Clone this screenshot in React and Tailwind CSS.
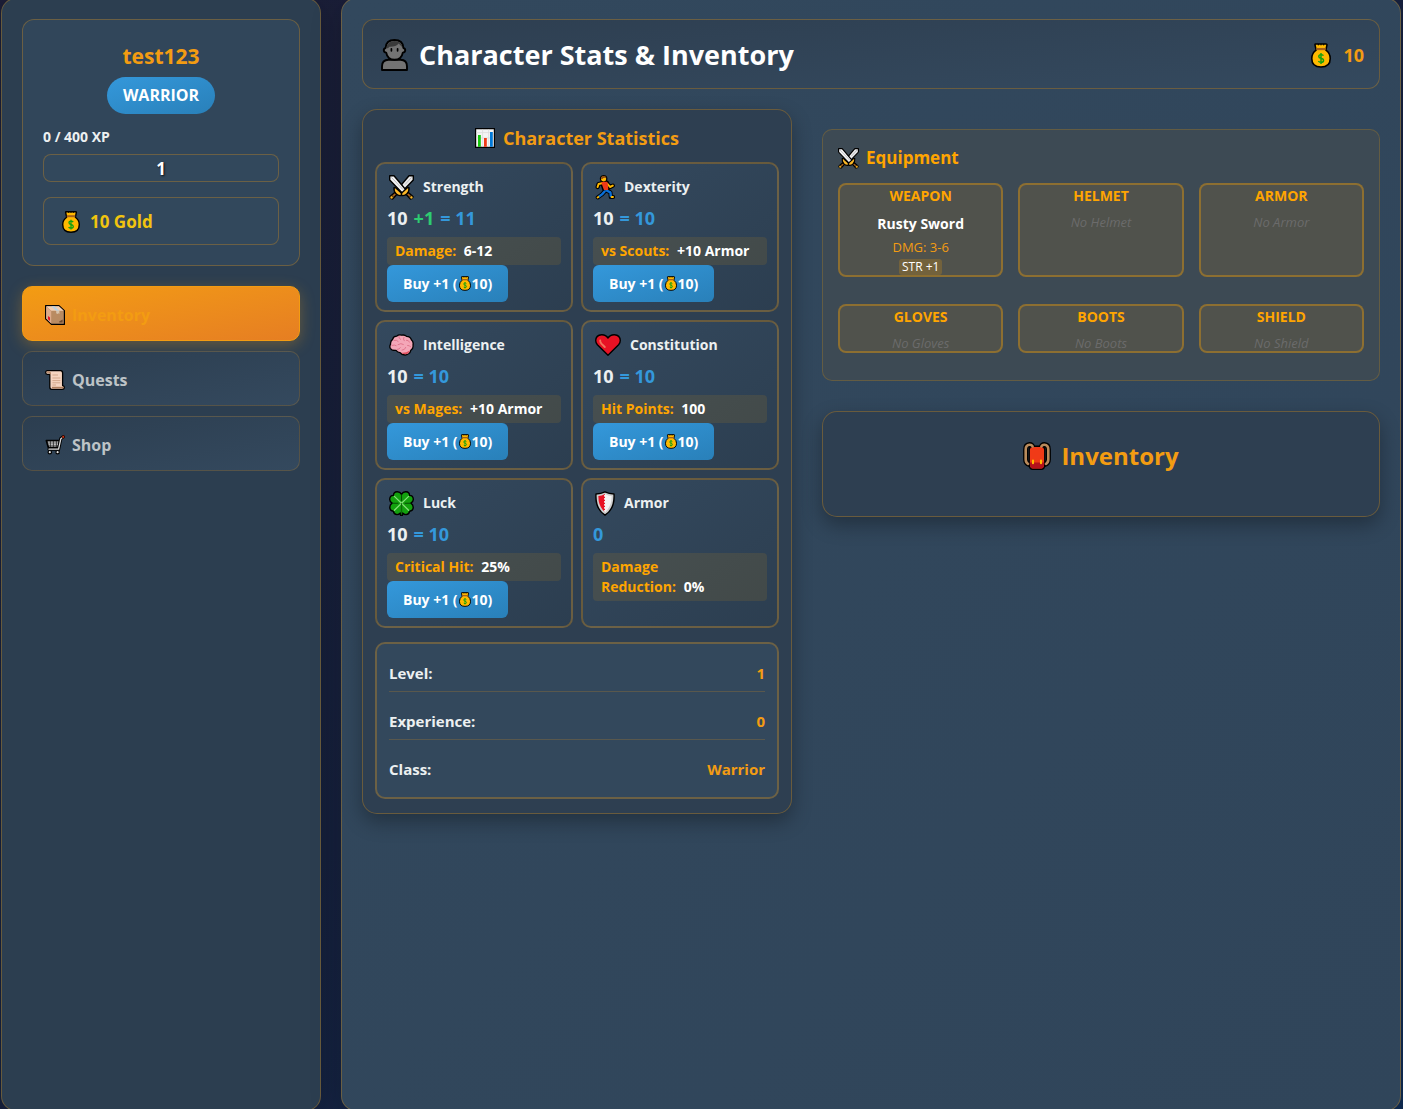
import React from "react";

function MoneyBag({ className }) {
  return (
    <svg viewBox="0 0 18 22" className={className} aria-hidden="true">
      <path d="M3.6 1.2Q3.6.7 4.2.7H13.6Q14.4.7 14.4 1.4L13.4 6.2Q17.3 9 17.3 13.6 17.3 21.3 9 21.3 .7 21.3 .7 13.6 .7 9 4.6 6.2L3.6 1.4Z" fill="#ffb900" stroke="#000" strokeWidth="1.4" strokeLinejoin="round" />
      <path d="M4.8 4.2h8.4v2H4.8z" fill="#a4611b" />
      <path d="M6.6.6v1.3M9 .6v1.3M11.4.6v1.3" stroke="#000" strokeWidth=".9" />
      <path d="M11.2 11.2Q10.6 10.2 9 10.2 7 10.2 7 11.8 7 13.1 9 13.5 11.3 14 11.3 15.5 11.3 17.2 9 17.2 7.2 17.2 6.7 16M9 8.8v9.8" fill="none" stroke="#13a10e" strokeWidth="1.3" />
    </svg>
  );
}

function Swords({ className }) {
  return (
    <svg viewBox="0 0 25 25" className={className} aria-hidden="true">
      <g stroke="#000" strokeWidth="1.4" strokeLinejoin="round">
        <path d="M24.3.8V5L11.5 18.2 8.2 14.8 20 .8Z" fill="#ececec" />
        <path d="M2.2 20.5 6 17.2 8 19.2 4.8 22.8 3.6 24 1 21.8Z" fill="#a4611b" />
        <path d="M5 12.6Q6.6 12 8 14L11.8 17.4Q13.2 19 12 20.6 9 21 7 18.8 4.6 16.4 5 12.6Z" fill="#fcb827" />
        <path d="M.7.8V5L13.5 18.2 16.8 14.8 5 .8Z" fill="#f6f6f6" />
        <path d="M22.8 20.5 19 17.2 17 19.2 20.2 22.8 21.4 24 24 21.8Z" fill="#a4611b" />
        <path d="M20 12.6Q18.4 12 17 14L13.2 17.4Q11.8 19 13 20.6 16 21 18 18.8 20.4 16.4 20 12.6Z" fill="#fcb827" />
      </g>
      <path d="M2.4 2.4 14 14.6" stroke="#a8a8b0" strokeWidth=".8" />
      <path d="M22.6 2.4 16 9.6" stroke="#a8a8b0" strokeWidth=".8" />
      <circle cx="2.6" cy="22.4" r="1.6" fill="#fcb827" stroke="#000" strokeWidth=".7" />
      <circle cx="22.4" cy="22.4" r="1.6" fill="#fcb827" stroke="#000" strokeWidth=".7" />
    </svg>
  );
}

function Runner({ className }) {
  return (
    <svg viewBox="0 0 20 25" className={className} aria-hidden="true">
      <g fill="none" strokeLinecap="round" strokeLinejoin="round">
        <g stroke="#000" strokeWidth="4.2">
          <path d="M7 8.2 3.6 9 2.6 12M12.6 9 15 12 17.8 10.6M11.5 15.5 15.4 17.4 15.8 22H18M9.6 16.5 7 19.4 2.8 22.4" />
          <path d="M7.2 7.8 11.8 7.6 12.6 14.8 9.4 14.7Z" fill="#000" />
        </g>
        <circle cx="8.6" cy="3.8" r="3.2" fill="#ffb900" stroke="#000" strokeWidth="1.2" />
        <path d="M5.9 3.8Q5.8 1.2 8.6 1 11.4 1.2 11.4 3Q8.8 2 7.4 4Z" fill="#8e4a12" />
        <path d="M7 8.2 3.6 9 2.6 12M12.6 9 15 12 17.8 10.6" stroke="#ffb900" strokeWidth="2" />
        <path d="M11.5 15.5 15.4 17.4 15.8 21M9.6 16.5 7 19.4 4.4 21.3" stroke="#0a6fd8" strokeWidth="2.4" />
        <path d="M7.4 7.9 11.7 7.7 12.4 14.2 9.6 14.1Z" fill="#f03a17" stroke="#f03a17" strokeWidth="1.8" />
        <path d="M2.6 22.5 3.4 22M16.6 22H18" stroke="#ffb900" strokeWidth="1.9" />
      </g>
    </svg>
  );
}

function Brain({ className }) {
  return (
    <svg viewBox="0 0 25 22" className={className} aria-hidden="true">
      <path d="M7 16.4Q2.5 16.6 1.2 14.2 .3 12 1.6 10.2 1.2 7 3.6 5.4 4.2 2.4 7.6 2.2 9.8.4 12.6 1.2 15.6.4 17.6 2.4 21.4 2.6 22.4 5.8 24.8 8 24 11 24.6 14.8 21.8 16.4 20.8 20.6 16.2 21 12.6 20.8 11 18.6 8.6 18.6 7 16.4Z" fill="#f4a6b7" stroke="#000" strokeWidth="1.3" />
      <path d="M12 18.6Q16 19.6 21 16.4 19.8 20 16.2 20.3 13.2 20.2 12 18.6Z" fill="#e0505f" />
      <path d="M5 6.4Q7.6 5.4 9.2 7.4M9.8 2.4Q9.6 4.6 11.6 5.4M15 3.2Q13.6 5 15.2 6.8M3 11.4Q5.4 10.4 7.2 11.6M9 10.6Q12 8.6 14.4 10.4M17.4 6.2Q19.8 6 20.6 8.2M8.4 15.4Q10.4 15.6 11.4 13.6M13 16.2Q16 16 16.8 13.4M18.6 11.4Q20.8 11.2 21.8 13" fill="none" stroke="#dd7088" strokeWidth=".9" strokeLinecap="round" />
    </svg>
  );
}

function Heart({ className }) {
  return (
    <svg viewBox="0 0 26 22" className={className} aria-hidden="true">
      <path d="M13 21.2 2.4 10.8Q.7 8.8.7 6.6.9 1 6.6.7 10.8.6 13 4 15.2.6 19.4.7 25.1 1 25.3 6.6 25.3 8.8 23.6 10.8Z" fill="#e81224" stroke="#000" strokeWidth="1.4" strokeLinejoin="round" />
      <path d="M5.2 6.4Q5 8 6.4 9.6L9.8 13" fill="none" stroke="#f2735c" strokeWidth="1.9" strokeLinecap="round" />
    </svg>
  );
}

function Clover({ className }) {
  return (
    <svg viewBox="0 0 25 25" className={className} aria-hidden="true">
      <path d="M12.5 3.4Q14 .6 17 .8 20.4 1 20.6 4.4 24 4.4 24.3 8 24.4 11 21.8 12.2 24.4 13.6 24.2 16.6 24 20 20.6 20.2 20.2 23.4 17 23.6 15 23.6 13.6 22L13.4 24.4H11.6L11.4 22Q10 23.6 8 23.6 4.8 23.4 4.4 20.2 1 20 .8 16.6.6 13.6 3.2 12.2.6 11 .7 8 1 4.4 4.4 4.4 4.6 1 8 .8 11 .6 12.5 3.4Z" fill="#13a10e" stroke="#000" strokeWidth="1.4" strokeLinejoin="round" />
      <path d="M12.5 3.6V10M12.5 14.5V22M3.4 12.2H9.4M15.6 12.2H21.6" stroke="#064d06" strokeWidth="1.1" />
      <path d="M5.4 5.4 19.6 19.2M19.6 5.4 5.4 19.2" stroke="#85e07a" strokeWidth="1.3" strokeLinecap="round" />
      <path d="M12.5 12.2V23.4" stroke="#0b6a0b" strokeWidth="1.2" />
    </svg>
  );
}

function Shield({ className }) {
  return (
    <svg viewBox="0 0 20 25" className={className} aria-hidden="true">
      <path d="M10 .8Q14 2.8 19 3 20 17.8 10 24.2 0 17.8 1 3 6 2.8 10 .8Z" fill="#cfcfcf" stroke="#000" strokeWidth="1.4" strokeLinejoin="round" />
      <path d="M10 3Q6.6 4.8 3.4 5 3.2 15.8 10 21Z" fill="#e81224" />
      <path d="M10 3Q13.4 4.8 16.6 5 16.8 15.8 10 21Z" fill="#f4f4f4" />
      <path d="M10 4v17" stroke="#f4f4f4" strokeWidth="1.8" strokeDasharray="1.7 1.3" />
    </svg>
  );
}

function Person({ className }) {
  return (
    <svg viewBox="0 0 27 32" className={className} aria-hidden="true">
      <g stroke="#000" strokeWidth="1.9" strokeLinejoin="round">
        <path d="M1 31V27.4Q1 21 7.4 20.8H19.6Q26 21 26 27.4V31Z" fill="#737373" />
        <path d="M4.6 9Q5 1 13.5 1 22 1 22.4 9 24.4 9.4 24.2 11.4 24 13.6 21.8 13.6 20.6 20.6 13.5 20.8 6.4 20.6 5.2 13.6 3 13.6 2.8 11.4 2.6 9.4 4.6 9Z" fill="#737373" />
      </g>
      <path d="M5.6 8.4Q6.4 2 13.5 1.9 20.6 2 21.4 8.4L20.4 7.2 17.6 4.6Q15 8 8.4 7.8L6.8 9.4Z" fill="#3a3a3a" />
      <path d="M10.4 9.8v2M16.6 9.8v2" stroke="#000" strokeWidth="1.7" strokeLinecap="round" />
    </svg>
  );
}

function BarChart({ className }) {
  return (
    <svg viewBox="0 0 20 20" className={className} aria-hidden="true">
      <path d="M.6.6H19.4V19.4H.6Z" fill="#f4f4f4" stroke="#000" strokeWidth="1.2" />
      <path d="M7.6 1.6V18.6M13.6 1.6V18.6M1.4 4.6H18.6M1.4 10H18.6" stroke="#dcdcdc" strokeWidth=".8" />
      <path d="M3 7H5.8V18.8H3Z" fill="#16c60c" />
      <path d="M9 10H11.8V18.8H9Z" fill="#f03a17" />
      <path d="M15 4H17.8V18.8H15Z" fill="#0078d7" />
    </svg>
  );
}

function Package({ className }) {
  return (
    <svg viewBox="0 0 20 20" className={className} aria-hidden="true">
      <path d="M.6.6H14L19.4 5.6V19.4H6.4L.6 13.8Z" fill="#b98b62" stroke="#000" strokeWidth="1.2" strokeLinejoin="round" />
      <path d="M1.2 1.2H13.8L18.8 5.8H6.2Z" fill="#f1cfb5" />
      <path d="M1.2 1.4 6.2 6V18.4L1.2 13.6Z" fill="#dcab8b" />
      <path d="M6.4 1.2H9.4L14.4 5.8H11.2Z" fill="#b9d3e6" />
      <path d="M11.2 5.8H14.4V9L13.4 8.2 12.4 9 11.2 8.2Z" fill="#d8c3ac" />
      <path d="M3 11 5 12.6V16L3 14.2Z" fill="#e81224" />
      <path d="M14.2 16.4 17.6 14.6V17.4H14.4Z" fill="#6b4a30" />
    </svg>
  );
}

function Scroll({ className }) {
  return (
    <svg viewBox="0 0 20 20" className={className} aria-hidden="true">
      <path d="M2.2.7H15.6Q17.6.9 17.6 3V15.6Q19.4 16 19.3 17.4 19.2 19.3 17 19.3H6.6Q4.8 19.2 4.8 17V4.4H2.4Q.7 4.2.7 2.4.8.8 2.2.7Z" fill="#f6d5c0" stroke="#000" strokeWidth="1.3" strokeLinejoin="round" />
      <path d="M1.6 2.2H4.2Q5.6 2.4 5.4 4.2" fill="none" stroke="#b07f5e" strokeWidth="1.2" />
      <path d="M7 17.6H18.6" stroke="#b07f5e" strokeWidth="1.6" />
      <path d="M7.4 5H13M7.4 8H15.4M7.4 10.6H15.4M7.4 12.8H15.4M7.4 15H11" stroke="#d3a88c" strokeWidth="1" />
    </svg>
  );
}

function Cart({ className }) {
  return (
    <svg viewBox="0 0 20 20" className={className} aria-hidden="true">
      <path d="M1.4 5.6H14.8L13.2 12.4H3.4Z" fill="#f2f2f2" stroke="#000" strokeWidth="1.8" strokeLinejoin="round" />
      <path d="M2.2 8H14M3 10.2H13.4M5.4 6V12M8.4 6V12M11.4 6V12" stroke="#222" strokeWidth=".8" />
      <path d="M18.2 1.8 15.8 3.6 13.6 14.2H4" fill="none" stroke="#000" strokeWidth="3.2" strokeLinecap="round" />
      <path d="M18 2 15.8 3.8 13.6 14.2H4" fill="none" stroke="#dedede" strokeWidth="1.3" strokeLinecap="round" />
      <circle cx="18.2" cy="1.9" r="1.3" fill="#f03a17" stroke="#000" strokeWidth=".6" />
      <circle cx="4.8" cy="17.2" r="1.7" fill="#e6e6e6" stroke="#000" strokeWidth="1.2" />
      <circle cx="12.6" cy="17.2" r="1.7" fill="#e6e6e6" stroke="#000" strokeWidth="1.2" />
    </svg>
  );
}

function Backpack({ className }) {
  return (
    <svg viewBox="0 0 28 28" className={className} aria-hidden="true">
      <g fill="none" strokeLinecap="round">
        <path d="M9.8 5.6Q9 2.6 6.6 2.7 2.7 3 2.7 7.4V17.6Q2.7 21.2 6.2 22.4M18.2 5.6Q19 2.6 21.4 2.7 25.3 3 25.3 7.4V17.6Q25.3 21.2 21.8 22.4" stroke="#000" strokeWidth="5.2" />
      </g>
      <path d="M9.4 4.2H18.6Q21.4 4.6 21.8 7.4V22.6Q21.6 27.2 18.2 27.3H9.8Q6.4 27.2 6.2 22.6V7.4Q6.6 4.6 9.4 4.2Z" fill="#f03a17" stroke="#000" strokeWidth="1.4" />
      <path d="M6.9 20.4H21.1V22.6Q20.8 26.5 18.2 26.6H9.8Q7.2 26.5 6.9 22.6Z" fill="#b5121b" />
      <path d="M9.6 4.4Q8.6 2.6 6.6 2.7 2.7 3 2.7 7.4V17.6Q2.7 20.6 5 21.8M18.4 4.4Q19.4 2.6 21.4 2.7 25.3 3 25.3 7.4V17.6Q25.3 20.6 23 21.8" fill="none" stroke="#b98b5c" strokeWidth="2.6" strokeLinecap="round" />
      <path d="M10 18.6V21.2M18 18.6V21.2" stroke="#ffb900" strokeWidth="2.1" strokeLinecap="round" />
    </svg>
  );
}

const navItems = [
  { label: "Inventory", Icon: Package, active: true },
  { label: "Quests", Icon: Scroll },
  { label: "Shop", Icon: Cart },
];

const stats = [
  { name: "Strength", Icon: Swords, size: "h-[25px] w-[25px]", base: 10, bonus: "+1", total: 11, effect: "Damage:", value: "6-12" },
  { name: "Dexterity", Icon: Runner, size: "h-[25px] w-5", base: 10, total: 10, effect: "vs Scouts:", value: "+10 Armor" },
  { name: "Intelligence", Icon: Brain, size: "h-[22px] w-[25px]", base: 10, total: 10, effect: "vs Mages:", value: "+10 Armor" },
  { name: "Constitution", Icon: Heart, size: "h-[22px] w-[26px]", base: 10, total: 10, effect: "Hit Points:", value: "100" },
  { name: "Luck", Icon: Clover, size: "h-[25px] w-[25px]", base: 10, total: 10, effect: "Critical Hit:", value: "25%" },
  { name: "Armor", Icon: Shield, size: "h-[25px] w-5", total: 0, effect: "Damage Reduction:", value: "0%" },
];

const slots = [
  { name: "WEAPON", item: { title: "Rusty Sword", damage: "DMG: 3-6", bonus: "STR +1" } },
  { name: "HELMET", empty: "No Helmet" },
  { name: "ARMOR", empty: "No Armor" },
  { name: "GLOVES", empty: "No Gloves" },
  { name: "BOOTS", empty: "No Boots" },
  { name: "SHIELD", empty: "No Shield" },
];

const details = [
  ["Level:", "1"],
  ["Experience:", "0"],
  ["Class:", "Warrior"],
];

function Sidebar() {
  return (
    <aside className="w-80 shrink-0 rounded-[15px] border border-[#f39c12]/30 bg-[#2c3e50] p-5 shadow-[0_8px_32px_rgba(0,0,0,0.2)]">
      <section className="rounded-xl border border-[#f39c12]/30 bg-[#31465a] p-5">
        <h2 className="text-center text-[21px] leading-8 font-bold text-[#f39c12]">test123</h2>
        <div className="mt-[5px] flex justify-center">
          <span className="rounded-[20px] bg-linear-to-br from-[#3498db] to-[#2980b9] px-4 py-2 text-base leading-[21px] font-bold text-white">WARRIOR</span>
        </div>
        <div className="mt-[13px] text-sm leading-5 font-bold text-[#ecf0f1]">0 / 400 XP</div>
        <div role="progressbar" aria-label="Experience" aria-valuenow={0} aria-valuemin={0} aria-valuemax={400} className="mt-[7px] h-7 rounded-lg border border-[#f39c12]/30 bg-[#34495e]/60 text-center text-[17px] leading-7 font-bold text-white [text-shadow:1px_1px_2px_rgba(0,0,0,0.8)]">1</div>
        <div className="mt-[15px] flex h-12 items-center gap-2.5 rounded-lg border border-[#f39c12]/30 bg-[#34495e]/60 px-[18px] pt-0.5 text-[17px] font-bold text-[#f1c40f]">
          <MoneyBag className="h-[22px] w-[18px]" />
          10 Gold
        </div>
      </section>
      <nav className="mt-5 flex flex-col gap-2.5">
        {navItems.map(({ label, Icon, active }) => (
          <button
            key={label}
            type="button"
            className={
              active
                ? "flex h-[55px] items-center gap-[7px] rounded-[10px] border border-[#f39c12] bg-linear-to-br from-[#f39c12] to-[#e67e22] px-[22px] pt-0.5 text-base font-bold text-[#f39c12] shadow-[0_4px_15px_rgba(243,156,18,0.3)]"
                : "flex h-[55px] items-center gap-[7px] rounded-[10px] border border-[#f39c12]/20 bg-linear-to-br from-[#2c3e50] to-[#34495e] px-[22px] pt-0.5 text-base font-bold text-[#bdc3c7]"
            }
          >
            <Icon className="h-5 w-5" />
            {label}
          </button>
        ))}
      </nav>
    </aside>
  );
}

function StatCard({ name, Icon, size, base, bonus, total, effect, value }) {
  return (
    <article className="rounded-[10px] border-2 border-[#f39c12]/30 bg-linear-to-br from-[#34495e] to-[#2c3e50] px-2.5 pt-2.5 pb-2">
      <div className="flex h-[26px] items-center gap-[9px] pl-0.5 text-sm font-bold text-[#ecf0f1]">
        <Icon className={size} />
        <h3>{name}</h3>
      </div>
      <div className="mt-1.5 flex h-6 items-center gap-1.5 text-lg font-bold text-[#3498db]">
        {base !== undefined && <span className="text-[#ecf0f1]">{base}</span>}
        {bonus && <span className="text-[#2ecc71]">{bonus}</span>}
        <span>{base !== undefined ? `= ${total}` : total}</span>
      </div>
      <div className="mt-[7px] rounded bg-[#ffa500]/10 px-2 py-1 text-sm leading-5 font-bold text-white">
        <span className="mr-1 text-[#ffa500]">{effect}</span>
        {"\u00a0"}
        {value}
      </div>
      {base !== undefined && (
        <button type="button" className="flex h-[37px] items-center rounded-md bg-linear-to-br from-[#3498db] to-[#2980b9] px-4 text-sm font-bold text-white">
          Buy +1 (<MoneyBag className="mx-px h-[15px] w-3" />10)
        </button>
      )}
    </article>
  );
}

function Statistics() {
  return (
    <section className="rounded-[15px] border border-[#f39c12]/30 bg-[#2e3f51] px-3 pt-3 pb-3.5 shadow-[0_8px_20px_rgba(0,0,0,0.3)]">
      <h2 className="mb-2 flex h-8 items-center justify-center gap-2 text-lg font-bold text-[#f39c12]">
        <BarChart className="h-5 w-5" />
        Character Statistics
      </h2>
      <div className="grid grid-cols-2 gap-2">
        {stats.map((stat) => (
          <StatCard key={stat.name} {...stat} />
        ))}
      </div>
      <dl className="mt-3.5 flex flex-col gap-3 rounded-[10px] border-2 border-[#f39c12]/30 bg-[#33485c] px-3 pt-3 pb-2.5">
        {details.map(([label, value]) => (
          <div key={label} className="flex justify-between border-b border-[#f39c12]/20 py-2 text-[15px] leading-[19px] font-bold last:border-b-0">
            <dt className="text-[#ecf0f1]">{label}</dt>
            <dd className="text-[#f39c12]">{value}</dd>
          </div>
        ))}
      </dl>
    </section>
  );
}

function Equipment() {
  return (
    <section className="rounded-[10px] border border-[#ffa500]/20 bg-[#3d4a54] px-[15px] pt-3 pb-[27px]">
      <h2 className="mb-[9px] flex h-8 items-center gap-[7px] text-[17px] font-bold text-[#ffa500]">
        <Swords className="h-[21px] w-[21px]" />
        Equipment
      </h2>
      <div className="grid grid-cols-3 gap-x-[15px] gap-y-[27px]">
        {slots.map(({ name, item, empty }) => (
          <div key={name} className="min-h-[49px] rounded-lg border-2 border-[#ffa500]/35 bg-[#50524c] text-center">
            <h3 className="mt-px text-sm leading-5 font-bold text-[#ffa500]">{name}</h3>
            {item ? (
              <div className="mt-2">
                <p className="text-sm leading-5 font-bold text-white">{item.title}</p>
                <p className="mt-[3px] text-[13px] leading-5 text-[#f39c12]">{item.damage}</p>
                <p className="mt-0.5 flex justify-center">
                  <span className="rounded-[3px] bg-[#ffa500]/20 px-[3px] text-xs leading-4 text-white">{item.bonus}</span>
                </p>
              </div>
            ) : (
              <p className="mt-1.5 h-[18px] text-[13px] leading-5 text-[#6b6b6b] italic">{empty}</p>
            )}
          </div>
        ))}
      </div>
    </section>
  );
}

export default function App() {
  return (
    <div className="h-screen overflow-hidden bg-linear-to-br from-[#1c1e37] via-[#16213e] to-[#0f2c54] pr-0.5 pl-px font-['Open_Sans','Noto_Sans',sans-serif]">
      <div className="-my-0.5 flex h-[calc(100%+4px)] gap-5">
        <Sidebar />
        <main className="min-w-0 flex-1 rounded-[15px] border border-[#f39c12]/30 bg-linear-to-br from-[#32485d] to-[#30455a] p-5 shadow-[0_8px_32px_rgba(0,0,0,0.2)]">
          <header className="flex h-[70px] items-center justify-between rounded-xl border border-[#f39c12]/30 bg-linear-to-br from-[#2e3f51] to-[#34495e] pt-0.5 pr-[15px] pl-[18px]">
            <h1 className="flex items-center gap-[11px] text-[27px] font-bold text-white">
              <Person className="h-8 w-[27px]" />
              Character Stats &amp; Inventory
            </h1>
            <div className="flex items-center gap-3 text-lg font-bold text-[#f39c12]">
              <MoneyBag className="h-[25px] w-5" />
              10
            </div>
          </header>
          <div className="mt-5 grid grid-cols-[430fr_558fr] items-start gap-[30px]">
            <Statistics />
            <div className="mt-5 flex flex-col gap-[30px]">
              <Equipment />
              <section className="h-[106px] rounded-[15px] border border-[#f39c12]/30 bg-[#2e3f51] pt-6 shadow-[0_8px_20px_rgba(0,0,0,0.3)]">
                <h2 className="flex h-10 items-center justify-center gap-2.5 text-2xl font-bold text-[#f39c12]">
                  <Backpack className="h-7 w-7" />
                  Inventory
                </h2>
              </section>
            </div>
          </div>
        </main>
      </div>
    </div>
  );
}
